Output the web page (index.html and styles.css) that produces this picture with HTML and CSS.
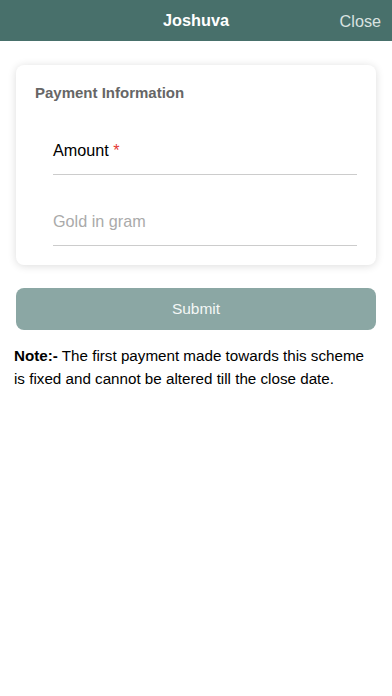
FILE: index.html
```html
<html lang="en">

<head>
    <meta charset="UTF-8">
    <meta name="viewport" content="width=device-width, initial-scale=1.0">
    <title>Joshuva</title>
    <link rel="stylesheet" href="styles.css">
</head>

<body>
    <div class="header">
        <span class="header-title">Joshuva</span>
        <span class="header-close">Close</span>
    </div>

    <div class="content">
        <div class="card">
            <p class="card-title">Payment Information</p>
            <div class="field">
                <span class="field-label">Amount <i class="req">*</i></span>
            </div>
            <div class="field">
                <span class="field-placeholder">Gold in gram</span>
            </div>
        </div>

        <div class="submit-btn">Submit</div>

        <p class="note"><b>Note:-</b> The first payment made towards this scheme is fixed and cannot be altered till the close date.</p>
    </div>
</body>

</html>
```

FILE: styles.css
```css
body {
    margin: 0;
    padding: 0;
    background: #fff;
    font-family: "Liberation Sans", Arial, sans-serif;
}

.header {
    height: 41px;
    background-color: #48706b;
    display: flex;
    align-items: center;
    justify-content: center;
    position: relative;
}

.header-title {
    color: #fff;
    font-size: 16.3px;
    font-weight: bold;
}

.header-close {
    position: absolute;
    right: 11px;
    top: 12px;
    color: #d9e2e0;
    font-size: 16.2px;
}

.content {
    padding: 24px 16px 0 16px;
}

.card {
    background: #fff;
    border-radius: 8px;
    box-shadow: 0 1px 8px rgba(0, 0, 0, 0.14);
    padding: 19px 19px 19px 19px;
}

.card-title {
    margin: 0;
    font-size: 15px;
    font-weight: bold;
    color: #666;
}

.field {
    margin-left: 18px;
    height: 44px;
    padding-bottom: 2px;
    border-bottom: 1px solid #ccc;
    display: flex;
    align-items: center;
    margin-top: 24px;
}

.field:first-of-type {
    margin-top: 27px;
}

.field-label {
    font-size: 16.2px;
    color: #000;
}

.req {
    font-style: normal;
    color: #e53935;
}

.field-placeholder {
    font-size: 16.2px;
    color: #aaa;
}

.submit-btn {
    margin-top: 23px;
    height: 42px;
    border-radius: 8px;
    background-color: #8ba7a4;
    color: #f4f7f6;
    font-size: 15.5px;
    display: flex;
    align-items: center;
    justify-content: center;
}

.note {
    margin: 14px 8px 0 -2px;
    font-size: 15.2px;
    line-height: 23px;
    color: #000;
}
```
